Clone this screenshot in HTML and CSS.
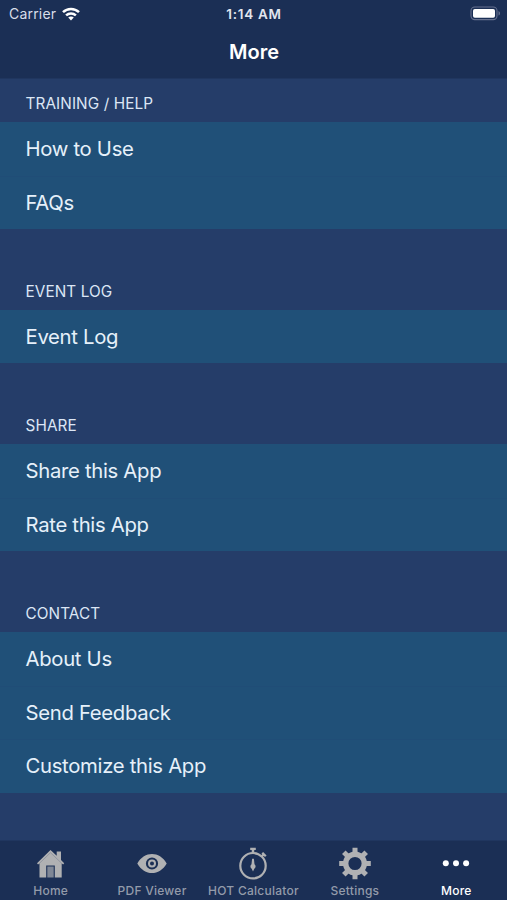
FILE: index.html
```html
<!DOCTYPE html>
<html lang="en">
<head>
<meta charset="utf-8">
<title>More</title>
<link rel="stylesheet" href="styles.css">
</head>
<body>
<div class="screen">
  <header class="top">
    <div class="status">
      <div class="carrier"><span>Carrier</span>
        <svg class="wifi" width="18" height="14" viewBox="0 0 18 14"><g fill="none" stroke="#fff" stroke-width="2.5"><path d="M1 5.2C5.4.9 12.6.9 17 5.2"/><path d="M4.1 8.4c2.8-2.6 7-2.6 9.8 0"/></g><path fill="#fff" d="M9 13.6l-2.8-3c1.6-1.4 4-1.4 5.6 0z"/></svg>
      </div>
      <div class="time">1:14 AM</div>
      <div class="battery">
        <svg width="31" height="15" viewBox="0 0 31 15"><rect x="1" y="1" width="26" height="12.6" rx="3.8" fill="none" stroke="#66718f" stroke-width="1.1"/><rect x="3" y="3" width="22" height="8.8" rx="1.8" fill="#fff"/><path d="M28.5 5v4.6c2-.8 2-3.8 0-4.6z" fill="#66718f"/></svg>
      </div>
    </div>
    <h1 class="title">More</h1>
  </header>
  <main class="list">
    <section><h2>TRAINING / HELP</h2><ul><li>How to Use</li><li>FAQs</li></ul></section>
    <section><h2>EVENT LOG</h2><ul><li>Event Log</li></ul></section>
    <section><h2>SHARE</h2><ul><li>Share this App</li><li>Rate this App</li></ul></section>
    <section><h2>CONTACT</h2><ul><li>About Us</li><li>Send Feedback</li><li>Customize this App</li></ul></section>
  </main>
  <nav class="tabs">
    <div class="tab"><svg width="32" height="34" viewBox="0 0 32 34"><path fill="#b0b1b3" d="M15.5 3L2 16.3l1.100 1.200L4.500 16.300V30.500h6.700V18.500h8.600V30.500h6.900V16.300l1.400 1.200L29.200 16.300 26 13V4.500h-4.300v4.200z"/><path fill="#7f8796" d="M12.300 19.500h6.400v11h-6.400z"/><path fill="none" stroke="#858b99" stroke-width=".7" d="M4.500 16.300l11-10.600 11.200 10.600"/></svg><span>Home</span></div>
    <div class="tab"><svg width="32" height="34" viewBox="0 0 32 34"><path fill="#b0b1b3" fill-rule="evenodd" d="M1.300 16.500C8.500 3.900 23.500 3.900 30.700 16.500 23.500 29.300 8.500 29.300 1.300 16.500zM16 10.400a6.100 6.100 0 1 0 0 12.200 6.100 6.100 0 0 0 0-12.200z"/><circle cx="16" cy="16.500" r="3" fill="none" stroke="#b0b1b3" stroke-width="2"/></svg><span>PDF Viewer</span></div>
    <div class="tab"><svg width="32" height="34" viewBox="0 0 32 34"><g fill="none" stroke="#b0b1b3"><circle cx="16" cy="18.700" r="12.700" stroke-width="2.200"/><path stroke-width="2.300" d="M13.200 1.800h5.600M24.500 9.500l2.800-2.800M25.300 5.700l3.500 3.500"/><path stroke-width="2.500" d="M16 2v5"/></g><path fill="#b0b1b3" d="M15.100 11.700h1.800l.6 5.500a2.800 2.800 0 0 1-.2 4.600l-1.300 2.600-1.300-2.600a2.800 2.800 0 0 1-.2-4.600z"/></svg><span>HOT Calculator</span></div>
    <div class="tab"><svg width="32" height="34" viewBox="0 0 32 34"><g fill="none" stroke="#b0b1b3"><circle cx="16" cy="16.500" r="9.300" stroke-width="5.400"/><path stroke-width="5" d="M16 .7v6M16 26.300v6M.2 16.500h6M25.800 16.500h6M4.800 5.300l4.300 4.300M22.900 23.400l4.300 4.300M27.200 5.300l-4.300 4.300M9.100 23.400l-4.300 4.300"/></g></svg><span>Settings</span></div>
    <div class="tab active"><svg width="32" height="34" viewBox="0 0 32 34"><g fill="#fff"><circle cx="5.800" cy="16.200" r="3"/><circle cx="16" cy="16.200" r="3"/><circle cx="26.100" cy="16.200" r="3"/></g></svg><span>More</span></div>
  </nav>
</div>
</body>
</html>
```
FILE: styles.css
```css
* { box-sizing: border-box; margin: 0; padding: 0; }
body { background: #253d69; font-family: Inter, "Liberation Sans", sans-serif; color: #e6f0fa; }
.screen { width: 507px; height: 900px; display: flex; flex-direction: column; overflow: hidden; }
.top { height: 79px; flex: none; background: #1b2f55; border-bottom: 1px solid #20365f; }
.status { height: 27px; display: grid; grid-template-columns: 1fr auto 1fr; align-items: center; padding: 0 6px 0 9px; }
.carrier { display: flex; align-items: center; gap: 6px; font-size: 14px; letter-spacing: .2px; color: #d8dee9; }
.wifi { display: block; }
.time { font-size: 13.500px; font-weight: 600; letter-spacing: .7px; margin-right: 2px; color: #e2e6ee; }
.battery { justify-self: end; height: 15px; }
.battery svg, .tab svg { display: block; }
.title { font-size: 20px; line-height: 51px; font-weight: 600; text-align: center; padding-left: 1px; color: #fff; }
.list { flex: 1; }
section { padding-bottom: 37.900px; }
h2 { height: 43px; padding: 13px 0 0 25.500px; font-size: 15.300px; line-height: 24px; font-weight: 400; letter-spacing: .1px; color: #dce6f5; }
ul { list-style: none; background: #205078; }
li { height: 53.500px; padding-left: 25.500px; font-size: 20.300px; line-height: 53px; letter-spacing: -.3px; }
li + li { border-top: 1px solid #204d77; line-height: 52px; }
.tabs { height: 60px; flex: none; display: grid; grid-template-columns: repeat(5, 1fr); background: #1b2f55; border-top: 1px solid #20365f; }
.tab { display: flex; flex-direction: column; align-items: center; padding-top: 6px; font-size: 12px; line-height: 20px; font-weight: 500; letter-spacing: .25px; color: #939baa; white-space: nowrap; }
.active { color: #fff; }
```
